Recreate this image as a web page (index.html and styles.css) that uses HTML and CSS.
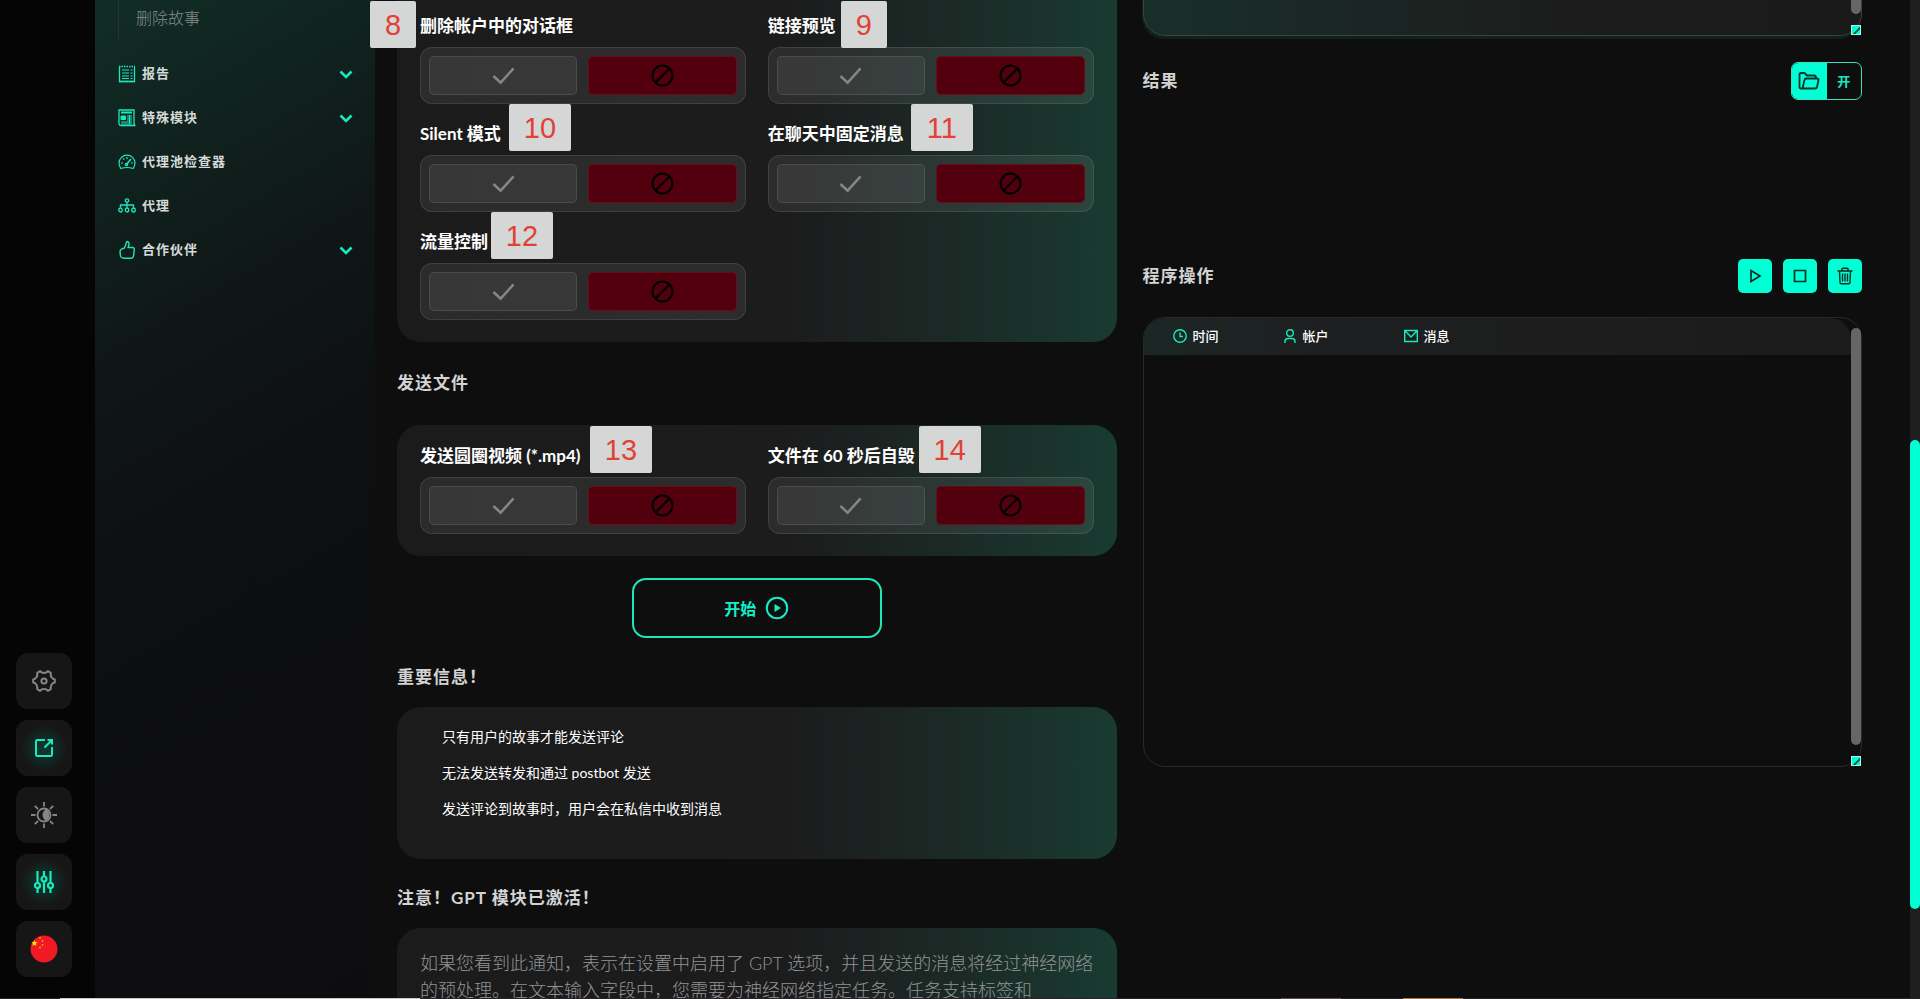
FILE: index.html
```
<!DOCTYPE html>
<html lang="zh-CN">
<head>
  <meta charset="UTF-8">
  <meta name="viewport" content="width=device-width, initial-scale=1.0">
  <title>发送评论</title>
  <link rel="stylesheet" href="styles.css">
</head>
<body>
  <!-- shared icons -->
  <svg class="sprite" aria-hidden="true">
    <symbol id="check" viewBox="0 0 24 24"><path d="M1.5 12.5l7.5 7L22.5 4.5" fill="none" stroke="currentColor" stroke-width="2.6"/></symbol>
    <symbol id="ban" viewBox="0 0 24 24"><circle cx="12" cy="12" r="10.4" fill="none" stroke="currentColor" stroke-width="2.2"/><path d="M4.8 19.2L19.2 4.8" stroke="currentColor" stroke-width="2.2"/></symbol>
    <symbol id="chevron" viewBox="0 0 14 10"><path d="M1.5 2.5L7 8l5.5-5.5" fill="none" stroke="currentColor" stroke-width="2.6"/></symbol>
  </svg>

  <div class="page">
    <nav class="rail">
      <button class="rail-btn" aria-label="设置">
        <svg width="24" height="24" viewBox="0 0 24 24" fill="none" stroke="currentColor" stroke-width="2" stroke-linejoin="round"><path d="M22.8 10.4v3.2C20 14 18.2 16.6 18.8 20.2L15.9 21.9C14 19.5 10 19.5 8.1 21.9L5.200 20.2C5.8 16.6 4 14 1.200 13.6V10.4C4 10 5.8 7.400 5.200 3.800L8.100 2.100C10 4.500 14 4.500 15.900 2.100L18.800 3.800C18.200 7.400 20 10 22.800 10.400z"/><circle cx="12" cy="12" r="2.600"/></svg>
      </button>
      <button class="rail-btn active" aria-label="打开">
        <svg width="20" height="20" viewBox="0 0 20 20" fill="none" stroke="currentColor" stroke-width="2"><path d="M11 2H3.5Q2 2 2 3.5v13Q2 18 3.5 18h13q1.5 0 1.5-1.5V9M10.5 9.5L18 2M13.500 2H18v4.500"/></svg>
      </button>
      <button class="rail-btn" aria-label="主题">
        <svg width="26" height="26" viewBox="0 0 26 26" fill="none" stroke="currentColor" stroke-width="1.8"><circle cx="13" cy="13" r="6.5"/><path d="M15 7a7 7 0 0 1 0 12 5 5 0 0 1-2-2 6 6 0 0 1 0-8z" fill="currentColor" stroke="none"/><path d="M13 0v4.500M13 21.500V26M0 13h4.500M21.500 13H26M3.800 3.800L7 7M19 19l3.200 3.200M22.200 3.800L19 7M7 19l-3.200 3.200"/></svg>
      </button>
      <button class="rail-btn active" aria-label="参数">
        <svg width="20" height="24" viewBox="0 0 20 24" fill="none" stroke="currentColor" stroke-width="2.2"><path d="M3.500 1v12M3.500 18v5M10 1v5.500M10 11.500V23M16.500 1v12M16.500 18v5"/><circle cx="3.500" cy="15.500" r="2.500"/><circle cx="10" cy="9" r="2.500"/><circle cx="16.500" cy="15.500" r="2.500"/></svg>
      </button>
      <button class="rail-btn" aria-label="语言">
        <svg width="28" height="28" viewBox="0 0 28 28"><circle cx="14" cy="14" r="13.5" fill="#ef1a24"/><path d="M4.500 5l.9 2 2.200.2-1.700 1.500.6 2.200-2-1.200-2 1.200.4-2.200L1.500 7.200l2.200-.2z" fill="#ffde00"/><g fill="#ffde00"><circle cx="10" cy="3" r=".8"/><circle cx="12.500" cy="6" r=".8"/><circle cx="12.500" cy="10" r=".8"/><circle cx="10" cy="12.500" r=".8"/></g></svg>
      </button>
    </nav>

    <aside class="sidebar">
      <div class="submenu"><a href="#">删除故事</a></div>
      <a class="menu-item" href="#">
        <svg width="18" height="18" viewBox="0 0 18 18" fill="none" stroke="currentColor"><path d="M1.500 2v14.500h15V2" stroke-width="1.300"/><path d="M1 1.500h16M1 16.500h16" stroke-width="1.600" stroke-dasharray="1.500 1"/><path d="M4 5h7M4 8h7M4 11h7M4 13.500h7M12.500 5h2M12.500 8h2M12.500 11h2M12.500 13.500h2" stroke-width="1.200"/></svg>
        <span>报告</span>
        <svg class="chevron"><use href="#chevron"/></svg>
      </a>
      <a class="menu-item" href="#">
        <svg width="18" height="18" viewBox="0 0 18 18" fill="none" stroke="currentColor"><path d="M1 1h15v13q0 2.500 1.500 2.500H3Q1 16.500 1 14z" stroke-width="1.300"/><path d="M3 3.500h11" stroke-width="2"/><path d="M3 7h4.500v3.500H3z" fill="currentColor"/><path d="M9 7h5M9 9h5M9 11h5M3 13h11M3 15h11M11.500 6v9"/></svg>
        <span>特殊模块</span>
        <svg class="chevron"><use href="#chevron"/></svg>
      </a>
      <a class="menu-item" href="#">
        <svg width="18" height="18" viewBox="0 0 18 18" fill="none" stroke="currentColor" stroke-width="1.2"><path d="M3 15.500A8 8 0 1 1 15 15.500q-6-2-12 0z"/><path d="M3 10h2M13 10h2M5 5.500l1.200 1.200M9 4v2"/><path d="M8.500 11.500L13 6" stroke-width="1.600"/><circle cx="8.500" cy="11.500" r="1.200"/></svg>
        <span>代理池检查器</span>
      </a>
      <a class="menu-item" href="#">
        <svg width="18" height="18" viewBox="0 0 18 18" fill="none" stroke="currentColor" stroke-width="1.3"><circle cx="9" cy="3.500" r="1.700"/><path d="M9 5.200v5.500M2.500 10.500V8h13v2.500"/><ellipse cx="2.500" cy="13" rx="1.700" ry="2"/><ellipse cx="9" cy="13" rx="1.700" ry="2"/><ellipse cx="15.500" cy="13" rx="1.700" ry="2"/></svg>
        <span>代理</span>
      </a>
      <a class="menu-item" href="#">
        <svg width="18" height="20" viewBox="0 0 18 20" fill="none" stroke="currentColor" stroke-width="1.4" stroke-linejoin="round"><path d="M6.500 8L8.800 1.500q2.700 0 2 3.500L10 7.500h4.500q1.800 0 1.800 2l-.8 6.500q-.3 2.200-2.500 2.200H6q-2.500 0-3.500-2L2 12q0-2 1.500-2.800 1.500-.7 3-1.200z"/></svg>
        <span>合作伙伴</span>
        <svg class="chevron"><use href="#chevron"/></svg>
      </a>
    </aside>

    <main class="content">
      <section class="column">
        <div class="card options card-cut">
          <div class="field" role="group" aria-labelledby="opt8">
            <div class="field-label" id="opt8">删除帐户中的对话框</div>
            <span class="badge badge-8">8</span>
            <div class="toggle">
              <button class="yes" aria-label="是"><svg><use href="#check"/></svg></button>
              <button class="no" aria-label="否"><svg><use href="#ban"/></svg></button>
            </div>
          </div>
          <div class="field" role="group" aria-labelledby="opt9">
            <div class="field-label" id="opt9">链接预览</div>
            <span class="badge badge-9">9</span>
            <div class="toggle">
              <button class="yes" aria-label="是"><svg><use href="#check"/></svg></button>
              <button class="no" aria-label="否"><svg><use href="#ban"/></svg></button>
            </div>
          </div>
          <div class="field" role="group" aria-labelledby="opt10">
            <div class="field-label" id="opt10">Silent 模式</div>
            <span class="badge badge-10">10</span>
            <div class="toggle">
              <button class="yes" aria-label="是"><svg><use href="#check"/></svg></button>
              <button class="no" aria-label="否"><svg><use href="#ban"/></svg></button>
            </div>
          </div>
          <div class="field" role="group" aria-labelledby="opt11">
            <div class="field-label" id="opt11">在聊天中固定消息</div>
            <span class="badge badge-11">11</span>
            <div class="toggle">
              <button class="yes" aria-label="是"><svg><use href="#check"/></svg></button>
              <button class="no" aria-label="否"><svg><use href="#ban"/></svg></button>
            </div>
          </div>
          <div class="field" role="group" aria-labelledby="opt12">
            <div class="field-label" id="opt12">流量控制</div>
            <span class="badge badge-12">12</span>
            <div class="toggle">
              <button class="yes" aria-label="是"><svg><use href="#check"/></svg></button>
              <button class="no" aria-label="否"><svg><use href="#ban"/></svg></button>
            </div>
          </div>
        </div>

        <h2 class="files-title">发送文件</h2>
        <div class="card options">
          <div class="field" role="group" aria-labelledby="opt13">
            <div class="field-label" id="opt13">发送圆圈视频 (*.mp4)</div>
            <span class="badge badge-13">13</span>
            <div class="toggle">
              <button class="yes" aria-label="是"><svg><use href="#check"/></svg></button>
              <button class="no" aria-label="否"><svg><use href="#ban"/></svg></button>
            </div>
          </div>
          <div class="field" role="group" aria-labelledby="opt14">
            <div class="field-label" id="opt14">文件在 60 秒后自毁</div>
            <span class="badge badge-14">14</span>
            <div class="toggle">
              <button class="yes" aria-label="是"><svg><use href="#check"/></svg></button>
              <button class="no" aria-label="否"><svg><use href="#ban"/></svg></button>
            </div>
          </div>
        </div>

        <button class="start-btn">
          开始
          <svg width="24" height="24" viewBox="0 0 24 24"><circle cx="12" cy="12" r="10.2" fill="none" stroke="currentColor" stroke-width="2"/><path d="M9.500 8v8l6.500-4z" fill="currentColor"/></svg>
        </button>

        <h2>重要信息！</h2>
        <ul class="card info">
          <li>只有用户的故事才能发送评论</li>
          <li>无法发送转发和通过 postbot 发送</li>
          <li>发送评论到故事时，用户会在私信中收到消息</li>
        </ul>

        <h2>注意！GPT 模块已激活！</h2>
        <p class="card notice">如果您看到此通知，表示在设置中启用了 GPT 选项，并且发送的消息将经过神经网络的预处理。在文本输入字段中，您需要为神经网络指定任务。任务支持标签和</p>
      </section>

      <section class="column">
        <div class="panel panel-cut">
          <div class="panel-body"></div>
          <div class="scroll"><span class="thumb"></span><span class="resizer"></span></div>
        </div>

        <div class="row results-row">
          <h2>结果</h2>
          <button class="open-btn">
            <span class="folder">
              <svg width="22" height="20" viewBox="0 0 22 20" fill="none" stroke="currentColor" stroke-width="1.8" stroke-linejoin="round"><path d="M4.500 17.500H3q-1.500 0-1.500-1.500V3.500Q1.500 2 3 2h3.500l2.500 2.500h7q2 0 2 2.500M4.500 17.500L6.500 9q.3-1.500 1.800-1.500H19q1.800 0 1.500 1.500l-1.500 7q-.3 1.500-2 1.500z"/></svg>
            </span>
            <span class="open-text">开</span>
          </button>
        </div>
        <div class="results"></div>

        <div class="row">
          <h2>程序操作</h2>
          <div class="actions">
            <button aria-label="开始"><svg width="16" height="16" viewBox="0 0 16 16" fill="none" stroke="currentColor" stroke-width="1.7"><path d="M4 2.500v11L13 8z"/></svg></button>
            <button aria-label="停止"><svg width="16" height="16" viewBox="0 0 16 16" fill="none" stroke="currentColor" stroke-width="1.7"><path d="M2.500 2.500h11v11h-11z"/></svg></button>
            <button aria-label="清除"><svg width="16" height="18" viewBox="0 0 16 18" fill="none" stroke="currentColor" stroke-width="1.4"><path d="M.5 4h15M5 4V2q0-.8.8-.8h4.400q.8 0 .8.800v2M2.500 4l.5 11.500q0 1.300 1.300 1.300h7.400q1.300 0 1.300-1.300L13.500 4M5.500 6.500v8M8 6.500v8M10.500 6.500v8"/></svg></button>
          </div>
        </div>

        <div class="panel log">
          <div class="panel-body">
            <table class="log-table">
              <thead>
                <tr>
                  <th class="col-time"><span class="th"><svg width="14" height="14" viewBox="0 0 14 14"><circle cx="7" cy="7" r="6.2"/><path d="M7 3.500V7.500h3"/></svg>时间</span></th>
                  <th class="col-account"><span class="th"><svg width="14" height="14" viewBox="0 0 14 14"><circle cx="7" cy="4" r="3.3"/><path d="M2 14v-1.500Q2 9.500 5 9.500h4q3 0 3 3V14"/></svg>帐户</span></th>
                  <th><span class="th"><svg width="14" height="14" viewBox="0 0 14 14"><path d="M.7 1.500h12.600v11H.7zM.7 1.500L7 8l6.300-6.500"/></svg>消息</span></th>
                </tr>
              </thead>
            </table>
          </div>
          <div class="scroll"><span class="thumb"></span><span class="resizer"></span></div>
        </div>
      </section>
    </main>

    <div class="page-scroll"><div class="page-thumb"></div></div>
  </div>

  <!-- strip along the bottom edge -->
  <div class="strip"><i class="light"></i><i class="grey"></i><i class="orange"></i></div>
</body>
</html>
```
FILE: styles.css
```
* {
  box-sizing: border-box;
}

body {
  margin: 0;
  background: #0e0e0f;
  color: #fff;
  font-family: Lato, "Noto Sans CJK SC", sans-serif;
  overflow: hidden;
}

button {
  font-family: inherit;
  padding: 0;
  border: none;
  cursor: pointer;
}

a {
  color: inherit;
  text-decoration: none;
}

h2 {
  margin: 27px 0 18px;
  font-size: 17px;
  line-height: 24px;
  font-weight: 700;
  letter-spacing: 1px;
  color: #d3d3d3;
}

.sprite {
  display: none;
}

.page {
  display: flex;
  height: 100vh;
  overflow: hidden;
}

/* left rail */
.rail {
  flex: 0 0 95px;
  display: flex;
  flex-direction: column;
  justify-content: flex-end;
  gap: 11px;
  padding: 0 0 22px 16px;
  background: #050505;
}

.rail-btn {
  display: flex;
  align-items: center;
  justify-content: center;
  width: 56px;
  height: 56px;
  border-radius: 12px;
  background: #161616;
  color: #858585;
}

.rail-btn.active {
  color: #1ce8bd;
  background: radial-gradient(circle, #0b3d33 0%, #161616 60%);
}

/* menu */
.sidebar {
  flex: 0 0 280px;
  padding-left: 23px;
  background: linear-gradient(150deg, #112d26 0%, #10221e 16%, #0f1716 32%, #0e0f10 50%, #0d0d0f 100%);
}

.submenu {
  height: 40px;
  margin: 0 0 12px;
  padding-left: 17px;
  border-left: 1px solid #26322f;
  font-size: 16px;
  line-height: 36px;
  font-weight: 300;
  color: #84908c;
}

.menu-item {
  display: flex;
  align-items: center;
  gap: 6px;
  height: 44px;
  padding-right: 22px;
  font-size: 13px;
  line-height: 18px;
  font-weight: 700;
  letter-spacing: 1px;
  color: #d5dad8;
}

.menu-item span {
  padding-bottom: 2px;
}

.menu-item svg {
  color: #1ce8bd;
}

.menu-item .chevron {
  width: 14px;
  height: 10px;
  margin-left: auto;
}

/* main area */
.content {
  flex: 1;
  display: grid;
  grid-template-columns: 1fr 1fr;
  gap: 26px;
  padding: 0 48px 0 22px;
  min-width: 0;
}

.card {
  border-radius: 24px;
  background: linear-gradient(90deg, #1b1b1c 0%, #1c1c1d 55%, #1b2a26 78%, #193b31 100%);
}

.options {
  display: grid;
  grid-template-columns: 1fr 1fr;
  column-gap: 22px;
  padding: 1px 23px 22px;
}

.card-cut {
  margin-top: -24px;
  padding-top: 20px;
}

.files-title {
  margin: 29px 0 30px;
}

.field {
  position: relative;
  height: 108px;
}

.field-label {
  padding: 18px 0 9px;
  font-size: 17px;
  line-height: 24px;
  font-weight: 700;
}

.toggle {
  display: flex;
  gap: 11px;
  height: 57px;
  padding: 8px;
  border: 1px solid rgba(255, 255, 255, 0.1);
  border-radius: 12px;
  background: rgba(255, 255, 255, 0.07);
}

.toggle button {
  flex: 1;
  display: flex;
  align-items: center;
  justify-content: center;
  border-radius: 5px;
}

.toggle svg {
  width: 23px;
  height: 23px;
}

.toggle .yes {
  border: 1px solid rgba(255, 255, 255, 0.1);
  background: rgba(255, 255, 255, 0.06);
  color: #858786;
}

.toggle .no {
  border: 1px solid #6b0c1c;
  background: #52000e;
  color: #000;
}

/* numbered marks over the form */
.badge {
  position: absolute;
  top: 0;
  width: 62px;
  height: 47px;
  border-radius: 2px;
  background: #d5d6d6;
  color: #e04236;
  font: 29px/48px "Liberation Sans", Arial, sans-serif;
  text-align: center;
}

.badge-8,
.badge-9 {
  top: 5px;
  width: 46px;
}

.badge-8 { left: -50px; }
.badge-9 { left: 73px; }
.badge-10 { left: 89px; }
.badge-11 { left: 143px; }
.badge-12 { left: 71px; }
.badge-13 { left: 170px; }
.badge-14 { left: 151px; }

.start-btn {
  display: flex;
  align-items: center;
  justify-content: center;
  gap: 9px;
  width: 250px;
  height: 60px;
  margin: 22px auto 0;
  border: 2px solid #1ce8bd;
  border-radius: 14px;
  background: transparent;
  color: #14f0c3;
  font-size: 16px;
  font-weight: 700;
}

.info {
  margin: 0;
  padding: 18px 45px 38px;
  display: grid;
  gap: 12px;
  list-style: none;
  font-size: 14px;
  line-height: 24px;
}

.notice {
  margin: 0;
  padding: 22px 23px;
  font-size: 18px;
  line-height: 27px;
  font-weight: 300;
  color: #929493;
}

/* right column */
.panel {
  display: flex;
  border: 1px solid #29292a;
  border-radius: 22px;
}

.panel-body {
  flex: 1;
  overflow: hidden;
  border-radius: 21px 21px 0 0;
}

.panel-cut {
  height: 60px;
  margin-top: -24px;
  border-color: #3a4340;
  background: linear-gradient(90deg, #192f2a 0%, #1b2624 30%, #1b1c1b 60%, #191a19 100%);
  box-shadow: -1px 3px 0 #10201c;
}

.row {
  display: flex;
  justify-content: space-between;
  align-items: center;
}

.row h2 {
  margin: 0;
}

.results-row {
  margin-top: 26px;
}

.results {
  min-height: 159px;
}

.open-btn {
  display: flex;
  width: 71px;
  height: 38px;
  border: 1px solid #3fdcbd;
  border-radius: 7px;
  background: transparent;
  overflow: hidden;
}

.open-btn span {
  flex: 1;
  display: flex;
  align-items: center;
  justify-content: center;
  height: 100%;
}

.folder {
  background: #00ffd5;
  color: #0d3029;
}

.open-text {
  color: #1ce8bd;
  font-size: 13px;
  line-height: 18px;
  font-weight: 700;
}

.actions {
  display: flex;
  gap: 11px;
}

.actions button {
  display: flex;
  align-items: center;
  justify-content: center;
  width: 34px;
  height: 34px;
  border-radius: 5px;
  background: #00ffd5;
  color: #0b2b25;
}

.log {
  height: 45vh;
  margin-top: 24px;
}

.log-table {
  width: 100%;
  border-collapse: collapse;
  background: linear-gradient(90deg, #1b2725 0%, #1e1f20 25%, #1b1b1b 100%);
}

.log-table th {
  height: 37px;
  padding: 0 0 2px;
  font-size: 13px;
  line-height: 18px;
  font-weight: 500;
  text-align: left;
}

.log-table .col-time {
  width: 139px;
  padding-left: 29px;
}

.log-table .col-account {
  width: 121px;
}

.th {
  display: flex;
  align-items: center;
  gap: 6px;
}

.th svg {
  fill: none;
  stroke: #1ce8bd;
  stroke-width: 1.4;
}

.scroll {
  flex: 0 0 10px;
  display: flex;
  flex-direction: column;
  gap: 11px;
  padding-top: 10px;
}

.thumb {
  flex: 1;
  border-radius: 5px;
  background: #666;
}

.resizer {
  height: 10px;
  border: 1px solid #aef5e6;
  background: linear-gradient(135deg, #00ffd5 55%, #0b6b5b 55%, #0b6b5b 70%, #00ffd5 70%);
}

.page-scroll {
  flex: 0 0 10px;
  background: #1f1f20;
}

.page-thumb {
  height: 47vh;
  margin-top: 44vh;
  border-radius: 5px;
  background: #00ffd5;
}

.strip {
  position: fixed;
  left: 0;
  right: 0;
  bottom: 0;
  height: 1px;
  display: flex;
  background: #242224;
}

.strip .light {
  width: 360px;
  margin-left: 60px;
  background: #c9c9c9;
}

.strip .grey {
  width: 60px;
  margin-left: 861px;
  background: #565256;
}

.strip .orange {
  width: 60px;
  margin-left: 62px;
  background: #a07850;
}
```
